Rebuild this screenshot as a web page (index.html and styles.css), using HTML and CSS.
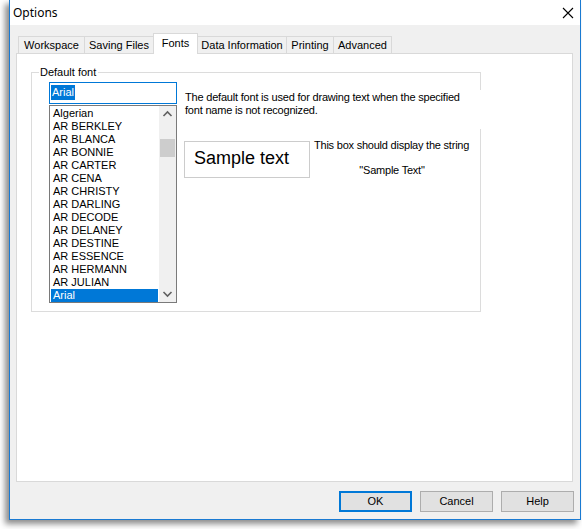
FILE: index.html
```html
<!DOCTYPE html>
<html>
<head>
<meta charset="utf-8">
<link rel="stylesheet" href="styles.css">
</head>
<body>
<div class="window">
  <div class="titlebar">
    <span class="title">Options</span>
    <svg class="close" width="12" height="12" viewBox="0 0 12 12"><path d="M1 1 L11 11 M11 1 L1 11" stroke="#000" stroke-width="1.1" fill="none"/></svg>
  </div>
  <div class="client">
    <div class="tabs">
      <div class="tab t-work">Workspace</div>
      <div class="tab t-save">Saving Files</div>
      <div class="tab t-fonts selected">Fonts</div>
      <div class="tab t-data">Data Information</div>
      <div class="tab t-print">Printing</div>
      <div class="tab t-adv">Advanced</div>
    </div>
    <div class="panel">
      <div class="group">
        <div class="legend">Default font</div>
        <div class="group-row">
          <div class="combo">
            <div class="edit"><span class="edit-sel">Arial</span></div>
            <div class="list">
              <ul class="items">
                <li>Algerian</li>
                <li>AR BERKLEY</li>
                <li>AR BLANCA</li>
                <li>AR BONNIE</li>
                <li>AR CARTER</li>
                <li>AR CENA</li>
                <li>AR CHRISTY</li>
                <li>AR DARLING</li>
                <li>AR DECODE</li>
                <li>AR DELANEY</li>
                <li>AR DESTINE</li>
                <li>AR ESSENCE</li>
                <li>AR HERMANN</li>
                <li>AR JULIAN</li>
                <li class="sel">Arial</li>
              </ul>
              <div class="scrollbar">
                <svg class="arrow" width="17" height="17" viewBox="0 0 17 17"><path d="M4.5 10 L8.5 6 L12.5 10" stroke="#606060" stroke-width="1.6" fill="none"/></svg>
                <div class="track"><div class="thumb"></div></div>
                <svg class="arrow" width="17" height="17" viewBox="0 0 17 17"><path d="M4.5 7 L8.5 11 L12.5 7" stroke="#606060" stroke-width="1.6" fill="none"/></svg>
              </div>
            </div>
          </div>
          <div class="right">
            <p class="desc">The default font is used for drawing text when the specified<br>font name is not recognized.</p>
            <div class="sample-row">
              <div class="sample">Sample text</div>
              <div class="note">
                <p class="note-line">This box should display the string</p>
                <p class="note-quote">"Sample Text"</p>
              </div>
            </div>
          </div>
        </div>
      </div>
    </div>
    <div class="buttons">
      <div class="btn default">OK</div>
      <div class="btn">Cancel</div>
      <div class="btn">Help</div>
    </div>
  </div>
</div>
</body>
</html>
```
FILE: styles.css
```css
* { box-sizing: border-box; }
html, body { margin: 0; padding: 0; background: #ffffff; }
body {
  font-family: "Liberation Sans", Arial, sans-serif;
  font-size: 11px;
  color: #000;
  width: 582px;
  height: 529px;
  overflow: hidden;
}
.window {
  margin-left: 9px;
  width: 572px;
  height: 520px;
  background: #f0f0f0;
  border-left: 1px solid #1a7ad2;
  border-right: 1px solid #1a7ad2;
  border-bottom: 1px solid #1a7ad2;
  box-shadow: -4px 4px 6px rgba(0,0,0,0.45);
  display: flex;
  flex-direction: column;
}
.titlebar {
  height: 25px;
  background: #ffffff;
  display: flex;
  align-items: center;
  justify-content: space-between;
  padding: 0 6px 0 3px;
}
.title {
  font-family: "Noto Sans", "Open Sans", sans-serif;
  font-size: 12px;
  line-height: 16px;
  margin-top: 1px;
}
.close { display: block; margin-top: 1px; }
.client {
  flex: 1;
  display: flex;
  flex-direction: column;
  padding: 8px 0 0 0;
}
.tabs {
  display: flex;
  align-items: flex-end;
  height: 20px;
  padding-left: 8px;
  position: relative;
  z-index: 2;
}
.tab {
  height: 17px;
  border: 1px solid #d9d9d9;
  border-bottom: none;
  background: #f0f0f0;
  margin-left: -1px;
  text-align: center;
  line-height: 16px;
  white-space: nowrap;
}
.tab.t-work { margin-left: 0; width: 67px; }
.tab.t-save { width: 70px; }
.tab.t-fonts { width: 45px; }
.tab.t-data { width: 90px; }
.tab.t-print { width: 48px; }
.tab.t-adv { width: 59px; }
.tab.selected {
  height: 21px;
  margin-bottom: -1px;
  background: #ffffff;
  line-height: 18px;
  position: relative;
  z-index: 3;
}
.panel {
  margin-left: 6px;
  width: 557px;
  height: 429px;
  background: #ffffff;
  border: 1px solid #d9d9d9;
  padding: 18px 0 0 14px;
}
.group {
  width: 450px;
  height: 240px;
  border: 1px solid #dcdcdc;
  padding-left: 17px;
}
.legend {
  display: table;
  margin-top: -7px;
  margin-left: -10px;
  padding: 0 2px 0 1px;
  background: #ffffff;
  line-height: 13px;
}
.group-row {
  display: flex;
  align-items: flex-start;
  margin-top: 3px;
}
.combo {
  flex: none;
  width: 128px;
  display: flex;
  flex-direction: column;
}
.edit {
  height: 22px;
  border: 1px solid #0078d7;
  padding: 2px 0 0 1px;
  background: #fff;
}
.edit-sel {
  display: inline-block;
  background: #0078d7;
  color: #fff;
  line-height: 15px;
  padding: 0 1px;
}
.list {
  margin-top: 1px;
  height: 198px;
  border: 1px solid #7a7a7a;
  display: flex;
  background: #fff;
}
.items {
  flex: 1;
  list-style: none;
  margin: 0;
  padding: 1px 1px 0 1px;
}
.items li {
  height: 13px;
  line-height: 13px;
  padding-left: 2px;
  white-space: nowrap;
}
.items li.sel { background: #0078d7; color: #fff; }
.scrollbar {
  flex: none;
  width: 17px;
  background: #f0f0f0;
  display: flex;
  flex-direction: column;
}
.arrow { display: block; flex: none; }
.track {
  flex: 1;
  padding: 16px 1px 0 1px;
}
.thumb {
  height: 18px;
  background: #cdcdcd;
}
.right {
  flex: none;
  margin-left: 6px;
  display: flex;
  flex-direction: column;
}
.desc {
  margin: 8px 0 0 0;
  width: 306px;
  height: 39px;
  padding: 1px 0 0 2px;
  background: #ffffff;
  line-height: 13px;
  letter-spacing: -0.2px;
  white-space: nowrap;
  position: relative;
  z-index: 1;
}
.sample-row {
  display: flex;
  align-items: flex-start;
  margin-top: 12px;
}
.sample {
  flex: none;
  margin-left: 1px;
  width: 126px;
  height: 37px;
  border: 1px solid #cccccc;
  font-size: 18px;
  line-height: 33px;
  padding-left: 9px;
  white-space: nowrap;
}
.note {
  flex: none;
  margin-left: 4px;
  margin-top: -2px;
  width: 156px;
  text-align: center;
  letter-spacing: -0.22px;
}
.note p { margin: 0; line-height: 13px; white-space: nowrap; }
.note-line { text-align: left; }
.note-quote { margin-top: 12px !important; }
.buttons {
  display: flex;
  justify-content: flex-end;
  gap: 8px;
  padding: 9px 6px 0 0;
}
.btn {
  width: 73px;
  height: 21px;
  border: 1px solid #adadad;
  background: #e1e1e1;
  text-align: center;
  line-height: 19px;
}
.btn.default {
  border: 2px solid #0078d7;
  line-height: 17px;
}
```
